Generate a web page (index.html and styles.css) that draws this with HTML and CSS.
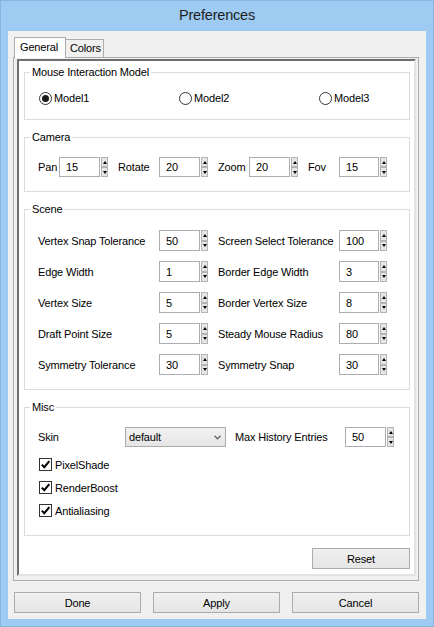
FILE: index.html
```html
<!DOCTYPE html>
<html>
<head>
<meta charset="utf-8">
<title>Preferences</title>
<link rel="stylesheet" href="styles.css">
</head>
<body>
<div class="window">
	<div class="titlebar">Preferences</div>
	<div class="client">
		<div class="tabs">
			<div class="tab active">General</div>
			<div class="tab colors">Colors</div>
		</div>
		<div class="pane">
			<div class="frame">

				<fieldset class="group">
					<legend>Mouse Interaction Model</legend>
					<div class="radios">
						<div class="radio checked"><span class="circle"></span>Model1</div>
						<div class="radio"><span class="circle"></span>Model2</div>
						<div class="radio"><span class="circle"></span>Model3</div>
					</div>
				</fieldset>

				<fieldset class="group">
					<legend>Camera</legend>
					<div class="camera-grid">
						<span class="lbl">Pan</span>
						<div class="spinbox"><span class="field">15</span><span class="arrows"><span class="up"></span><span class="down"></span></span></div>
						<span class="lbl">Rotate</span>
						<div class="spinbox"><span class="field">20</span><span class="arrows"><span class="up"></span><span class="down"></span></span></div>
						<span class="lbl">Zoom</span>
						<div class="spinbox"><span class="field">20</span><span class="arrows"><span class="up"></span><span class="down"></span></span></div>
						<span class="lbl">Fov</span>
						<div class="spinbox"><span class="field">15</span><span class="arrows"><span class="up"></span><span class="down"></span></span></div>
					</div>
				</fieldset>

				<fieldset class="group">
					<legend>Scene</legend>
					<div class="scene-grid">
						<span class="lbl">Vertex Snap Tolerance</span>
						<div class="spinbox"><span class="field">50</span><span class="arrows"><span class="up"></span><span class="down"></span></span></div>
						<span class="lbl">Screen Select Tolerance</span>
						<div class="spinbox"><span class="field">100</span><span class="arrows"><span class="up"></span><span class="down"></span></span></div>

						<span class="lbl">Edge Width</span>
						<div class="spinbox"><span class="field">1</span><span class="arrows"><span class="up"></span><span class="down"></span></span></div>
						<span class="lbl">Border Edge Width</span>
						<div class="spinbox"><span class="field">3</span><span class="arrows"><span class="up"></span><span class="down"></span></span></div>

						<span class="lbl">Vertex Size</span>
						<div class="spinbox"><span class="field">5</span><span class="arrows"><span class="up"></span><span class="down"></span></span></div>
						<span class="lbl">Border Vertex Size</span>
						<div class="spinbox"><span class="field">8</span><span class="arrows"><span class="up"></span><span class="down"></span></span></div>

						<span class="lbl">Draft Point Size</span>
						<div class="spinbox"><span class="field">5</span><span class="arrows"><span class="up"></span><span class="down"></span></span></div>
						<span class="lbl">Steady Mouse Radius</span>
						<div class="spinbox"><span class="field">80</span><span class="arrows"><span class="up"></span><span class="down"></span></span></div>

						<span class="lbl">Symmetry Tolerance</span>
						<div class="spinbox"><span class="field">30</span><span class="arrows"><span class="up"></span><span class="down"></span></span></div>
						<span class="lbl">Symmetry Snap</span>
						<div class="spinbox"><span class="field">30</span><span class="arrows"><span class="up"></span><span class="down"></span></span></div>
					</div>
				</fieldset>

				<fieldset class="group">
					<legend>Misc</legend>
					<div class="misc-grid">
						<span class="lbl">Skin</span>
						<div class="combo">
							<span>default</span>
							<svg class="chevron" width="7" height="5" viewBox="0 0 7 5"><polyline points="0.5,0.8 3.5,3.8 6.5,0.8" fill="none" stroke="#6a6a6a" stroke-width="1.4"/></svg>
						</div>
						<span class="lbl">Max History Entries</span>
						<div class="spinbox"><span class="field">50</span><span class="arrows"><span class="up"></span><span class="down"></span></span></div>
					</div>
					<div class="checks">
						<div class="check"><span class="box"><svg width="11" height="11" viewBox="0 0 11 11"><polyline points="1.8,5.6 4.3,8.2 9.3,2.2" fill="none" stroke="#000" stroke-width="2"/></svg></span>PixelShade</div>
						<div class="check"><span class="box"><svg width="11" height="11" viewBox="0 0 11 11"><polyline points="1.8,5.6 4.3,8.2 9.3,2.2" fill="none" stroke="#000" stroke-width="2"/></svg></span>RenderBoost</div>
						<div class="check"><span class="box"><svg width="11" height="11" viewBox="0 0 11 11"><polyline points="1.8,5.6 4.3,8.2 9.3,2.2" fill="none" stroke="#000" stroke-width="2"/></svg></span>Antialiasing</div>
					</div>
				</fieldset>

				<div class="reset-row"><button class="btn reset">Reset</button></div>
			</div>
		</div>
		<div class="buttons">
			<button class="btn">Done</button>
			<button class="btn">Apply</button>
			<button class="btn">Cancel</button>
		</div>
	</div>
</div>
</body>
</html>
```

FILE: styles.css
```css
* {
	box-sizing: border-box;
}

body {
	margin: 0;
	font-family: "Liberation Sans", Arial, sans-serif;
	font-size: 11px;
	letter-spacing: -0.15px;
	color: #000;
}

.window {
	width: 434px;
	height: 627px;
	background: #9dcbf1;
	border: 1px solid #86b6e0;
	padding: 0 7px;
}

.titlebar {
	height: 30px;
	line-height: 28px;
	text-align: center;
	font-size: 14.5px;
	letter-spacing: -0.2px;
	color: #1e1e1e;
}

.client {
	height: 588px;
	background: #f0f0f0;
	padding: 6px 0 0 5px;
}

/* tabs */
.tabs {
	display: flex;
	align-items: flex-end;
	height: 20px;
	margin-left: 1px;
}

.tab {
	height: 18px;
	border: 1px solid #acacac;
	border-bottom: 0;
	line-height: 16px;
	background: #f0f0f0;
}

.tab.active {
	position: relative;
	z-index: 1;
	width: 52px;
	height: 21px;
	padding: 1px 0 0 5px;
	margin-bottom: -1px;
	background: #fff;
}

.tab.colors {
	width: 39px;
	padding-left: 4px;
	margin-left: -1px;
	line-height: 17px;
}

.pane {
	display: flex;
	width: 406px;
	height: 524px;
	border: 1px solid #acacac;
	padding: 1px 2px 4px 3px;
}

.frame {
	flex: 1;
	min-width: 0;
	background: #fff;
	border: 2px solid;
	border-color: #6f6f6f #e3e3e3 #e3e3e3 #6f6f6f;
	padding: 4px 4px 0 5px;
}

/* group boxes */
.group {
	margin: 10px 0 0;
	padding: 0;
	min-width: 0;
	border: 1px solid #dcdcdc;
}

.group:first-child {
	margin-top: 0;
}

.group legend {
	margin-left: 5px;
	padding: 0 2px;
	line-height: 14px;
}

.radios {
	display: grid;
	grid-template-columns: 140px 140px 1fr;
	grid-auto-rows: 20px;
	align-items: center;
	padding: 9px 0 11px 14px;
}

.radio {
	display: flex;
	align-items: center;
	gap: 2px;
}

.circle {
	display: flex;
	align-items: center;
	justify-content: center;
	width: 13px;
	height: 13px;
	border: 1px solid #333;
	border-radius: 50%;
	background: #fff;
}

.radio.checked .circle::after {
	content: "";
	width: 7px;
	height: 7px;
	border-radius: 50%;
	background: #1a1a1a;
}

.camera-grid {
	display: grid;
	grid-template-columns: 21px 59px 41px 59px 31px 59px 31px 48px;
	grid-auto-rows: 20px;
	align-items: center;
	padding: 13px 0 14px 13px;
}

.scene-grid {
	display: grid;
	grid-template-columns: 121px 59px 121px 48px;
	grid-auto-rows: 21px;
	row-gap: 10px;
	align-items: center;
	padding: 14px 0 14px 13px;
}

.misc-grid {
	display: grid;
	grid-template-columns: 87px 110px 110px 49px;
	grid-auto-rows: 20px;
	align-items: center;
	padding: 13px 0 0 13px;
}

.lbl {
	white-space: nowrap;
}

/* spin boxes */
.spinbox {
	display: flex;
	height: 100%;
}

.field {
	display: flex;
	align-items: center;
	width: 41px;
	height: 100%;
	padding-left: 6px;
	border: 1px solid #abadb3;
	background: #fff;
}

.arrows {
	display: flex;
	flex-direction: column;
	width: 7px;
	margin-left: 1px;
}

.arrows span {
	flex: 1;
	display: flex;
	align-items: center;
	justify-content: center;
	border: 1px solid #b4b4b4;
	background: #e6e6e6;
}

.arrows .up::after {
	content: "";
	border-left: 2px solid transparent;
	border-right: 2px solid transparent;
	border-bottom: 3px solid #000;
}

.arrows .down::after {
	content: "";
	border-left: 2px solid transparent;
	border-right: 2px solid transparent;
	border-top: 3px solid #000;
}

.combo {
	display: flex;
	align-items: center;
	justify-content: space-between;
	width: 101px;
	height: 20px;
	padding: 0 4px 0 3px;
	border: 1px solid #acacac;
	background: linear-gradient(#f2f2f2, #e5e5e5);
}

/* check boxes */
.checks {
	padding: 6px 0 13px 14px;
}

.check {
	display: flex;
	align-items: center;
	gap: 3px;
	height: 23px;
}

.box {
	display: flex;
	width: 13px;
	height: 13px;
	border: 1px solid #333;
	background: #fff;
}

/* buttons */
.btn {
	height: 21px;
	padding: 0;
	font: inherit;
	letter-spacing: inherit;
	color: #000;
	border: 1px solid #acacac;
	background: linear-gradient(#f0f0f0, #e5e5e5);
}

.reset-row {
	display: flex;
	justify-content: flex-end;
	margin-top: 12px;
}

.reset {
	width: 98px;
}

.buttons {
	display: grid;
	grid-template-columns: repeat(3, 127px);
	column-gap: 12px;
	margin: 11px 0 0 1px;
}
```
